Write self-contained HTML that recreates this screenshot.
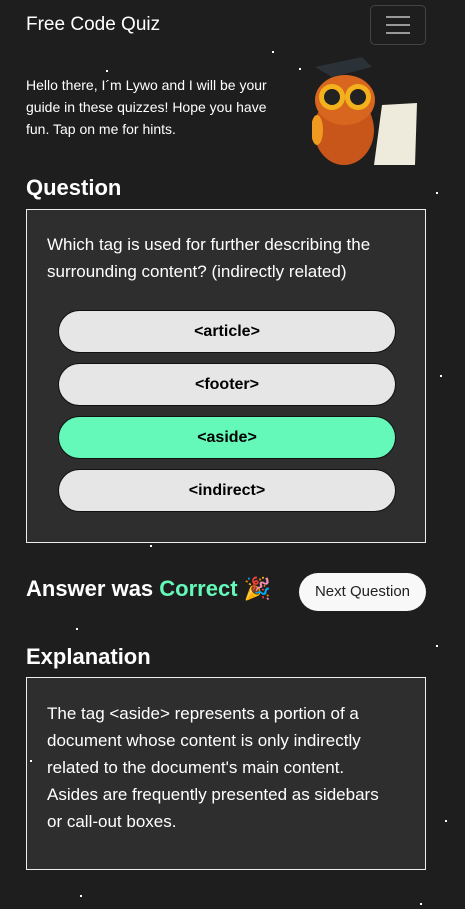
<!DOCTYPE html>
<html><head><style>
*{margin:0;padding:0;box-sizing:border-box}
body{width:465px;height:909px;background:#1e1e1e;color:#fff;font-family:"Liberation Sans",sans-serif;position:relative;overflow:hidden}
.a{position:absolute}
.s{position:absolute;background:#fff;width:2px;height:2px}
.box{position:absolute;left:26px;width:400px;background:#2e2e2e;border:1px solid #eee}
.btn{position:absolute;left:31px;width:338px;height:43px;border:1px solid #111;border-radius:22px;background:#e6e6e6;color:#000;font-weight:bold;font-size:16px;text-align:center;line-height:41px}
h2{position:absolute;left:26px;font-size:22px;font-weight:bold}
</style></head><body>
<div class="a" style="left:26px;top:14px;font-size:19px">Free Code Quiz</div>
<div class="a" style="left:370px;top:5px;width:56px;height:40px;border:1px solid #444;border-radius:5px">
<div class="a" style="left:15px;top:10px;width:24px;height:2px;background:#999"></div>
<div class="a" style="left:15px;top:18px;width:24px;height:2px;background:#999"></div>
<div class="a" style="left:15px;top:26px;width:24px;height:2px;background:#999"></div></div>
<div class="a" style="left:26px;top:74px;width:258px;font-size:14px;line-height:22px">Hello there, I´m Lywo and I will be your guide in these quizzes! Hope you have fun. Tap on me for hints.</div>
<svg class="a" style="left:312px;top:55px" width="112" height="115" viewBox="0 0 112 115">
<ellipse cx="32" cy="75" rx="30" ry="35" fill="#c8561a"/>
<ellipse cx="33" cy="45" rx="30" ry="25" fill="#d9661e"/>
<circle cx="20" cy="42" r="13" fill="#f3b21d"/><circle cx="46" cy="42" r="13" fill="#f3b21d"/>
<circle cx="20" cy="42" r="8" fill="#222"/><circle cx="46" cy="42" r="8" fill="#222"/>
<polygon points="3,12 50,2 60,12 20,22" fill="#2a3238"/>
<path d="M70 50 L105 48 L103 110 L62 110 Z" fill="#eeeadc"/>
<ellipse cx="5" cy="75" rx="6" ry="15" fill="#f09a20"/>
</svg>
<h2 style="top:175px">Question</h2>
<div class="box" style="top:209px;height:334px">
<div class="a" style="left:20px;top:21px;width:360px;font-size:17px;line-height:27px">Which tag is used for further describing the surrounding content? (indirectly related)</div>
<div class="btn" style="top:100px">&lt;article&gt;</div>
<div class="btn" style="top:153px">&lt;footer&gt;</div>
<div class="btn" style="top:206px;background:#64f9b8">&lt;aside&gt;</div>
<div class="btn" style="top:259px">&lt;indirect&gt;</div>
</div>
<h2 style="top:576px">Answer was <span style="color:#64f9b8">Correct</span> 🎉</h2>
<div class="a" style="left:299px;top:573px;width:127px;height:38px;background:#f8f8f8;border-radius:19px;color:#222;font-size:15px;text-align:center;line-height:38px">Next Question</div>
<h2 style="top:644px">Explanation</h2>
<div class="box" style="top:677px;height:193px">
<div class="a" style="left:20px;top:22px;width:345px;font-size:17px;line-height:27px">The tag &lt;aside&gt; represents a portion of a document whose content is only indirectly related to the document's main content. Asides are frequently presented as sidebars or call-out boxes.</div>
</div>
<div class="s" style="left:272px;top:51px"></div><div class="s" style="left:299px;top:68px"></div>
<div class="s" style="left:106px;top:70px"></div><div class="s" style="left:436px;top:192px"></div>
<div class="s" style="left:440px;top:375px"></div><div class="s" style="left:150px;top:545px"></div>
<div class="s" style="left:76px;top:628px"></div><div class="s" style="left:436px;top:645px"></div>
<div class="s" style="left:80px;top:895px"></div><div class="s" style="left:420px;top:903px"></div>
<div class="s" style="left:30px;top:760px"></div><div class="s" style="left:445px;top:820px"></div>
</body></html>
